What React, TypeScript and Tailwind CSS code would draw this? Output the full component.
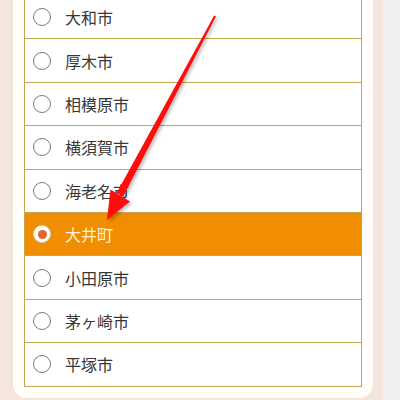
import React from 'react'

const cities = ['大和市', '厚木市', '相模原市', '横須賀市', '海老名市', '大井町', '小田原市', '茅ヶ崎市', '平塚市']
const selected = '大井町'

function Radio({ checked }: { checked: boolean }) {
  return (
    <span
      className={
        checked
          ? 'flex h-[18px] w-[18px] shrink-0 items-center justify-center rounded-full border border-[#d8d0c0] bg-white'
          : 'flex h-[18px] w-[18px] shrink-0 items-center justify-center rounded-full border border-[#7a7a7a] bg-white'
      }
    >
      {checked && <span className="h-[9px] w-[9px] rounded-full bg-[#e0642c]" />}
    </span>
  )
}

export default function App() {
  return (
    <div className="relative flex h-[400px] w-[400px] overflow-hidden bg-[#efefef]">
      <div className="flex w-[383px] bg-[#f4e6dd] pl-[13px] pr-[10px]">
        {/* Card */}
        <div className="-mt-[20px] h-[418px] w-full rounded-b-[14px] bg-[#fffefa] px-[11px] pt-[15px]">
          <ul className="border-x border-t border-[#c4a552]" style={{ fontFamily: '"Noto Sans CJK JP", "Noto Sans", sans-serif' }}>
            {cities.map((c) => {
              const on = c === selected
              return (
                <li
                  key={c}
                  className={
                    on
                      ? 'box-border flex h-[43.4px] items-center gap-[14px] border-b border-[#c4a552] bg-[#f08d00] pl-[8px] text-[16px] text-[#fff3cf]'
                      : 'box-border flex h-[43.4px] items-center gap-[14px] border-b border-[#c4a552] bg-white pl-[8px] text-[16px] text-[#383838]'
                  }
                >
                  <Radio checked={on} />
                  <span>{c}</span>
                </li>
              )
            })}
          </ul>
        </div>
      </div>

      {/* Annotation arrow */}
      <svg className="pointer-events-none absolute left-0 top-0" width="400" height="400" viewBox="0 0 400 400">
        <defs>
          <filter id="sh" x="-20%" y="-20%" width="140%" height="140%">
            <feDropShadow dx="2" dy="2" stdDeviation="1.5" floodColor="#000" floodOpacity="0.25" />
          </filter>
        </defs>
        <g filter="url(#sh)" fill="#ff0a0a">
          <polygon points="214.2,15.5 216,16.4 123.2,196.4 116.6,193" />
          <polygon points="107,220 110.5,189.5 130,201.5" />
        </g>
      </svg>
    </div>
  )
}
